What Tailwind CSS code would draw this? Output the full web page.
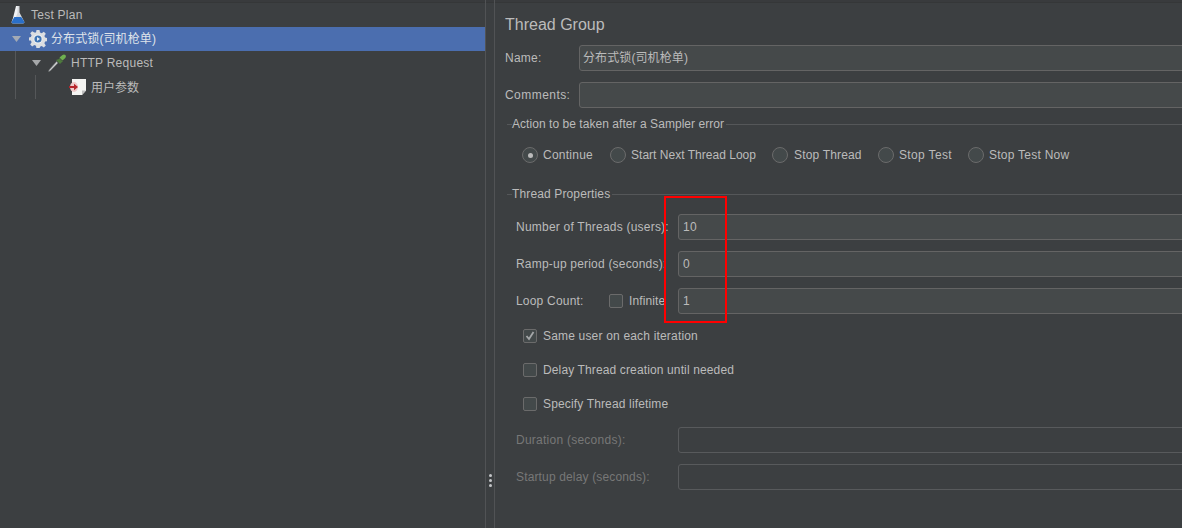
<!DOCTYPE html>
<html>
<head>
<meta charset="utf-8">
<script src="https://cdn.jsdelivr.net/npm/@tailwindcss/browser@4"></script>
</head>
<body class="m-0">
<div class="relative flex h-[528px] w-[1182px] overflow-hidden bg-[#3c3f41] text-[12px] text-[#bbbbbb] font-['Liberation_Sans','Noto_Sans_CJK_SC',sans-serif] tracking-[0.25px]">
  <div class="absolute left-0 top-0 h-[3px] w-full bg-[#393b3d] border-b border-[#353738]"></div>
  <!-- tree -->
  <div class="w-[485px] shrink-0 pt-[3px]">
    <div class="flex h-6 items-center pl-[10px]">
      <svg class="w-[16px] h-[20px] mr-[5px]" viewBox="0 0 16 20"><path d="M6 1h3.500v6.500l4.700 9c.5 1.200-.2 2-1.200 2H3c-1.200 0-1.800-.9-1.300-2l4.300-9z" fill="#d5d8dc"/><path d="M6 1h1.500v7L4 17H2z" fill="#f2f3f5"/><path d="M4.300 12h6.900l3 4.500c.4 1.100-.1 1.900-1.100 1.900H3c-1.100 0-1.700-.8-1.200-1.900z" fill="#2a6fc9"/></svg>
      <span>Test Plan</span>
    </div>
    <div class="flex h-6 items-center bg-[#4b6eaf] pl-[12px]">
      <svg class="w-[10px] h-[6px] mr-[7px]" viewBox="0 0 10 6"><path d="M0 0h9L4.500 6z" fill="#a3aab5"/></svg>
      <svg class="w-[18px] h-[18px] mr-[4px]" viewBox="0 0 18 18"><path d="M7.500 0h3l.5 2.500 1.700.7 2.100-1.400 2 2-1.400 2.100.7 1.700 2.400.5v3l-2.400.5-.7 1.700 1.400 2.100-2 2-2.100-1.400-1.700.7-.5 2.300h-3L7 15.700l-1.700-.7-2.100 1.400-2-2 1.400-2.100-.7-1.700L0 10.500v-3l1.900-.5.700-1.700-1.400-2.100 2-2 2.100 1.400L7 2.500z" fill="#dcdee1"/><circle cx="9" cy="9" r="4.500" fill="#f0f2f4"/><circle cx="9" cy="9" r="3.600" fill="#3f74b4"/><path d="M8 7l3 2-3 2z" fill="#e8edf3"/></svg>
      <span class="tracking-[0.1px] text-[#dfe3ea]">分布式锁(司机枪单)</span>
    </div>
    <div class="relative flex h-6 items-center pl-[32px]">
      <span class="absolute left-[15px] top-0 h-12 w-px bg-[#555759]"></span>
      <svg class="w-[10px] h-[6px] mr-[6px]" viewBox="0 0 10 6"><path d="M0 0h9L4.500 6z" fill="#a6a8aa"/></svg>
      <svg class="w-[19px] h-[20px] mr-[4px]" viewBox="0 0 19 20"><path d="M1 17l-.4 1.600L2.200 18 10 10 8.600 8.400z" fill="#c9cbcc" stroke="#6a6d6f" stroke-width=".6"/><path d="M8 7l4 4 2-2 1-.2-3.800-3.800-.2 1z" fill="#4d7a3c"/><path d="M11.500 4.500l3 3 2.800-2.600c1-1.200.6-2.200 0-2.800-.7-.7-1.700-.9-2.800 0z" fill="#6fb04f"/></svg>
      <span>HTTP Request</span>
    </div>
    <div class="relative flex h-6 items-center pl-[68px]">
      <span class="absolute left-[35px] top-0 h-6 w-px bg-[#555759]"></span>
      <svg class="w-[19px] h-[18px] mr-[4px]" viewBox="0 0 19 18"><path d="M4 1h14v11.500L14 17H4z" fill="#f4f4f2"/><path d="M14 17v-4.500h4z" fill="#bdbdbd"/><ellipse cx="6" cy="9" rx="4" ry="5" fill="#eec9c9"/><path d="M1 8h5V5.800L10 9l-4 3.200V10H1z" fill="#b5252b"/></svg>
      <span class="translate-y-px tracking-normal">用户参数</span>
    </div>
  </div>
  <!-- splitter -->
  <div class="relative w-[10px] shrink-0 border-x border-[#515355]">
    <div class="absolute left-[3px] top-[474px] flex flex-col gap-[2px]">
      <span class="size-[3px] rounded-full bg-[#c4c6c8]"></span>
      <span class="size-[3px] rounded-full bg-[#c4c6c8]"></span>
      <span class="size-[3px] rounded-full bg-[#c4c6c8]"></span>
    </div>
  </div>
  <!-- form -->
  <div class="min-w-0 flex-1 pl-[10px] pt-[15px]">
    <div class="h-[19px] text-[16px] leading-[19px] tracking-normal">Thread Group</div>
    <div class="mt-[11px] flex h-[26px] items-center">
      <span class="w-[74px] shrink-0">Name:</span>
      <div class="flex h-[26px] flex-1 items-center rounded-[3px] border border-[#646464] bg-[#45494a] pl-[3px] -mr-2 tracking-[0.1px]">分布式锁(司机枪单)</div>
    </div>
    <div class="mt-[11px] flex h-[26px] items-center">
      <span class="w-[74px] shrink-0 tracking-[0.45px]">Comments:</span>
      <div class="h-[26px] flex-1 rounded-[3px] border border-[#646464] bg-[#45494a] -mr-2"></div>
    </div>
    <div class="mt-[8px] flex h-4 items-center pl-[2px]">
      <span class="h-px w-[5px] bg-[#555759]"></span>
      <span class="whitespace-nowrap tracking-[0.05px]">Action to be taken after a Sampler error</span>
      <span class="ml-[2px] h-px flex-1 bg-[#555759]"></span>
    </div>
    <div class="mt-[15px] flex h-4 items-center whitespace-nowrap pl-[17px]">
      <span class="mr-[5px] flex size-4 items-center justify-center rounded-full border border-[#6b6b6b] bg-[#43494a]"><span class="size-[5px] rounded-full bg-[#bbbbbb]"></span></span>
      <span class="w-[67px]">Continue</span>
      <span class="mr-[5px] size-4 rounded-full border border-[#6b6b6b] bg-[#43494a]"></span>
      <span class="w-[141px] tracking-[0.02px]">Start Next Thread Loop</span>
      <span class="mr-[6px] size-4 rounded-full border border-[#6b6b6b] bg-[#43494a]"></span>
      <span class="w-[84px] tracking-[0.17px]">Stop Thread</span>
      <span class="mr-[5px] size-4 rounded-full border border-[#6b6b6b] bg-[#43494a]"></span>
      <span class="w-[69px] tracking-[0.35px]">Stop Test</span>
      <span class="mr-[5px] size-4 rounded-full border border-[#6b6b6b] bg-[#43494a]"></span>
      <span>Stop Test Now</span>
    </div>
    <div class="mt-[23px] flex h-4 items-center pl-[2px]">
      <span class="h-px w-[5px] bg-[#555759]"></span>
      <span class="whitespace-nowrap tracking-[0.13px]">Thread Properties</span>
      <span class="ml-[2px] h-px flex-1 bg-[#555759]"></span>
    </div>
    <div class="mt-[12px] flex h-[26px] items-center pl-[11px]">
      <span class="w-[162px] shrink-0 whitespace-nowrap tracking-[0.22px]">Number of Threads (users):</span>
      <div class="flex h-[26px] flex-1 items-center rounded-[3px] border border-[#646464] bg-[#45494a] pl-[4px] -mr-2">10</div>
    </div>
    <div class="mt-[11px] flex h-[26px] items-center pl-[11px]">
      <span class="w-[162px] shrink-0 whitespace-nowrap tracking-[0.2px]">Ramp-up period (seconds):</span>
      <div class="flex h-[26px] flex-1 items-center rounded-[3px] border border-[#646464] bg-[#45494a] pl-[4px] -mr-2">0</div>
    </div>
    <div class="mt-[11px] flex h-[26px] items-center pl-[11px]">
      <span class="w-[93px] shrink-0 tracking-[0.2px]">Loop Count:</span>
      <span class="mr-[6px] size-[14px] rounded-[2px] border border-[#6b6b6b] bg-[#43494a]"></span>
      <span class="w-[49px] shrink-0 tracking-[0.1px]">Infinite</span>
      <div class="flex h-[26px] flex-1 items-center rounded-[3px] border border-[#646464] bg-[#45494a] pl-[4px] -mr-2">1</div>
    </div>
    <div class="mt-[14px] flex h-4 items-center pl-[18px]">
      <span class="mr-[6px] flex size-[14px] items-center justify-center rounded-[2px] border border-[#6b6b6b] bg-[#43494a]">
        <svg class="size-[12px]" viewBox="0 0 12 12"><path d="M2.500 6l2.500 3 4.500-7" fill="none" stroke="#a4a7a9" stroke-width="1.800"/></svg>
      </span>
      <span class="tracking-[0.18px]">Same user on each iteration</span>
    </div>
    <div class="mt-[18px] flex h-4 items-center pl-[18px]">
      <span class="mr-[6px] size-[14px] rounded-[2px] border border-[#6b6b6b] bg-[#43494a]"></span>
      <span class="tracking-[0.13px]">Delay Thread creation until needed</span>
    </div>
    <div class="mt-[18px] flex h-4 items-center pl-[18px]">
      <span class="mr-[6px] size-[14px] rounded-[2px] border border-[#6b6b6b] bg-[#43494a]"></span>
      <span class="tracking-[0.15px]">Specify Thread lifetime</span>
    </div>
    <div class="mt-[15px] flex h-[26px] items-center pl-[11px] text-[#777777]">
      <span class="w-[162px] shrink-0">Duration (seconds):</span>
      <div class="h-[26px] flex-1 rounded-[3px] border border-[#585a5c] -mr-2"></div>
    </div>
    <div class="mt-[11px] flex h-[26px] items-center pl-[11px] text-[#777777]">
      <span class="w-[162px] shrink-0 tracking-[0.15px]">Startup delay (seconds):</span>
      <div class="h-[26px] flex-1 rounded-[3px] border border-[#585a5c] -mr-2"></div>
    </div>
  </div>
  <!-- annotation -->
  <div class="absolute left-[664px] top-[196px] h-[127px] w-[63px] border-2 border-[#ff0000]"></div>
</div>
</body>
</html>
